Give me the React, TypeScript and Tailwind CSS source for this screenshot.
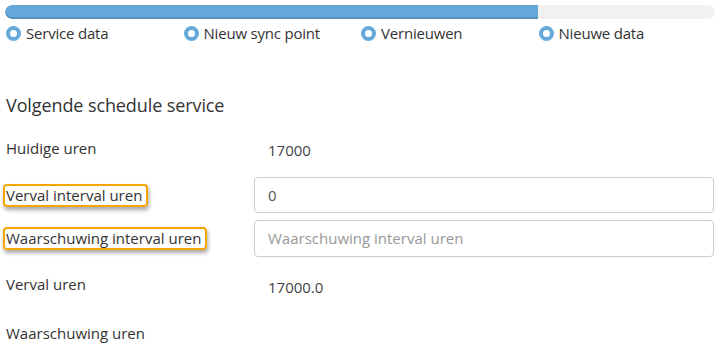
const steps = ["Service data", "Nieuw sync point", "Vernieuwen", "Nieuwe data"];

function Radio() {
  return (
    <span className="inline-block h-[15px] w-[15px] shrink-0 rounded-full border-[4px] border-[#66a9db] bg-white" />
  );
}

function Highlight({ children }: { children: React.ReactNode }) {
  return (
    <span className="inline-block rounded-[4px] border-2 border-[#f5a50a] pr-[4px] leading-[19px] shadow-[1px_3px_4px_rgba(0,0,0,0.35)]">
      {children}
    </span>
  );
}

export default function App() {
  return (
    <div
      className="w-[721px] h-[345px] overflow-hidden bg-white text-[15px] text-[#333]"
      style={{ fontFamily: '"Open Sans", "Noto Sans", sans-serif' }}
    >
      {/* progress */}
      <div className="mx-[5px] mt-[5px] h-[14px] w-[710px] overflow-hidden rounded-full bg-[#f1f1f1]">
        <div className="h-full w-[533px] rounded-l-full bg-[#64a8da] shadow-[inset_0_-2px_0_rgba(0,0,0,0.12)]" />
      </div>

      <div className="ml-[6px] mt-[6px] grid w-[710px] grid-cols-4">
        {steps.map((s) => (
          <div key={s} className="flex items-center gap-[5px] h-[16px]">
            <Radio />
            <span className="leading-[16px] tracking-[-0.2px]">{s}</span>
          </div>
        ))}
      </div>

      <h3 className="ml-[6px] mt-[52px] text-[18px] leading-[24px] tracking-[-0.1px]">
        Volgende schedule service
      </h3>

      <div className="mt-[20px]">
        {/* Huidige uren */}
        <div className="flex h-[32px]">
          <div className="w-[249px] pl-[6px] leading-[22px]">Huidige uren</div>
          <div className="pl-[19px] pt-[2px] leading-[22px] text-[#444]">17000</div>
        </div>

        {/* Verval interval uren */}
        <div className="mt-[8px] flex h-[36px] items-center">
          <div className="w-[249px] pl-[3px]">
            <Highlight>
              <span className="pl-[1px]">Verval interval uren</span>
            </Highlight>
          </div>
          <div className="ml-[5px] flex h-[36px] w-[460px] items-center rounded-[4px] border border-[#ccc] px-[13px] text-[#555]">
            0
          </div>
        </div>

        {/* Waarschuwing interval uren */}
        <div className="mt-[7px] flex h-[37px] items-center">
          <div className="w-[249px] pl-[3px]">
            <Highlight>
              <span className="pl-[1px]">Waarschuwing interval uren</span>
            </Highlight>
          </div>
          <div className="ml-[5px] flex h-[37px] w-[460px] items-center rounded-[4px] border border-[#ccc] px-[13px] text-[#999]">
            Waarschuwing interval uren
          </div>
        </div>

        {/* Verval uren */}
        <div className="mt-[16px] flex h-[32px]">
          <div className="w-[249px] pl-[6px] leading-[22px]">Verval uren</div>
          <div className="pl-[19px] pt-[3px] leading-[22px] text-[#444]">17000.0</div>
        </div>

        <div className="mt-[17px] flex">
          <div className="w-[249px] pl-[6px] leading-[22px]">Waarschuwing uren</div>
        </div>
      </div>
    </div>
  );
}
